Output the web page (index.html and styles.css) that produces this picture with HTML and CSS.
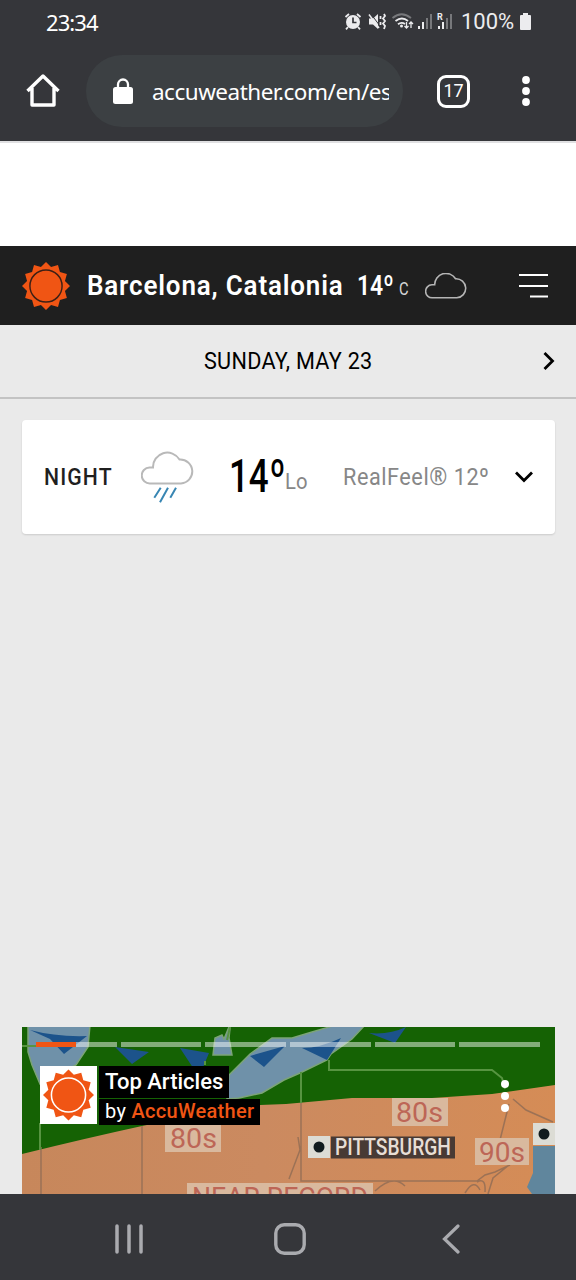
FILE: index.html
```html
<!DOCTYPE html>
<html lang="en">
<head>
<meta charset="utf-8">
<title>Barcelona, Catalonia Weather</title>
<link rel="stylesheet" href="styles.css">
</head>
<body>
<svg class="symbols" aria-hidden="true">
  <symbol id="sun" viewBox="-100 -100 200 200">
    <path fill="#f05514" d="M0-100 21-79 50-87 58-58 87-50 79-21 100 0 79 21 87 50 58 58 50 87 21 79 0 100-21 79-50 87-58 58-87 50-79 21-100 0-79-21-87-50-58-58-50-87-21-79Z"/>
    <circle r="67" fill="none" stroke="currentColor" stroke-width="6"/>
  </symbol>
</svg>
<div class="screen">
  <header class="chrome">
    <div class="status">
      <span class="clock">23:34</span>
      <svg class="status-icons" viewBox="0 0 116 22" width="116" height="22">
        <g fill="none" stroke="#ececee">
          <circle cx="9" cy="11" r="7" fill="#ececee" stroke="none"/>
          <path stroke="#35363a" stroke-width="1.7" d="M9 6.500V11.500H12.500"/>
          <path stroke-width="1.800" d="M1.500 6 5 3M13 3l3.500 3M4 16l-2 2.300M14 16l2 2.300"/>
          <path fill="#ececee" stroke="none" d="M25 7.500h4l5-4.500v15l-5-4.500h-4Z"/>
          <path stroke="#35363a" stroke-width="1" d="M27 3 36 15"/>
          <path stroke-width="1.500" d="M25 3.500 35 17"/>
          <path stroke-width="1.800" d="M40 3l1 2-2 2.500 2 2.500-2 2.500 2 2.500-1 3M36.500 5v3M36.500 11v3"/>
          <path stroke="#77787b" stroke-width="1.800" d="M48.500 7Q57.500-.5 67 7"/>
          <path stroke-width="1.800" d="M51.500 10Q58 5 64 10M54 13.200Q57.500 10.500 61 13"/>
          <circle cx="57.500" cy="15" r="1.500" fill="#ececee" stroke="none"/>
          <path stroke-width="1.300" d="M62.500 11v6M60.500 15l2 2 2-2M67 17v-6M65 13l2-2 2 2"/>
        </g>
        <g fill="#ececee">
          <path d="M74 15h2v3h-2zM78 11h2v7h-2zM94 15h2v3h-2zM98 11h2v7h-2z"/>
          <path fill="#77787b" d="M82 7h2v11h-2zM86 3h2v15h-2zM102 7h2v11h-2zM106 3h2v15h-2z"/>
          <text x="93" y="9" class="roaming">R</text>
        </g>
      </svg>
      <span class="percent">100%</span>
      <svg class="battery" viewBox="0 0 11 17" width="11" height="17"><path fill="#ececee" d="M3 0h5v2h2q1 0 1 1v13q0 1-1 1H1q-1 0-1-1V3q0-1 1-1h2Z"/></svg>
    </div>
    <div class="toolbar">
      <svg class="home" viewBox="0 0 34 34" width="34" height="34"><path fill="none" stroke="#fff" stroke-width="3.400" stroke-linejoin="round" d="M1.500 17 17 2 32.500 17M6 14v17h22V14"/></svg>
      <div class="address">
        <svg viewBox="0 0 20 26" width="20" height="26"><rect y="9" width="20" height="17" rx="2.500" fill="#fff"/><path d="M5 10V6.500a5 5 0 0 1 10 0V10" fill="none" stroke="#fff" stroke-width="2.300"/></svg>
        <span class="url">accuweather.com/en/es</span>
      </div>
      <span class="tabs">17</span>
      <svg class="more" viewBox="0 0 8 30" width="8" height="30" fill="#fff"><circle cx="4" cy="4" r="3.900"/><circle cx="4" cy="15" r="3.900"/><circle cx="4" cy="26" r="3.900"/></svg>
    </div>
  </header>
  <main>
    <div class="ad-space"></div>
    <div class="location">
      <svg class="brand"><use href="#sun"/></svg>
      <span class="city">Barcelona, Catalonia</span>
      <span class="now">14º</span>
      <span class="unit">C</span>
      <svg class="now-cloud" viewBox="0 1.500 54 33" width="43" height="26"><path class="cloud" d="M9 33a8 8 0 0 1-.5-16.500H12A14.300 14.300 0 0 1 38.500 8.800 A12.100 12.100 0 1 1 40 33Z"/></svg>
      <svg class="menu" viewBox="0 0 30 25" width="30" height="25"><path stroke="#fff" stroke-width="2" d="M0 2h29M0 13h29M11 23.500h18"/></svg>
    </div>
    <div class="day">
      <span class="date">SUNDAY, MAY 23</span>
      <svg class="next" viewBox="0 0 12 20" width="12" height="20"><path fill="none" stroke="#000" stroke-width="2.800" d="m1.500 2 8 8-8 8"/></svg>
    </div>
    <section class="night">
      <span class="period">NIGHT</span>
      <svg class="rain" viewBox="0 0 54 52" width="54" height="52"><path class="cloud rain-cloud" d="M9 32.500a8 8 0 0 1-.5-16H12A14.300 14.300 0 0 1 38.500 8.500 A12 12 0 1 1 40 32.500Z"/><path stroke="#3886b3" stroke-width="2" d="M19.700 36.700 13.300 46.700M27 36.700 19 51.300M35 36.700 29.300 46.700"/></svg>
      <span class="low">14<span class="degree">º</span></span>
      <span class="lo">Lo</span>
      <span class="feel">RealFeel<span class="mark">®</span> 12º</span>
      <svg class="expand" viewBox="0 0 20 12" width="20" height="12"><path fill="none" stroke="#000" stroke-width="2.800" d="m2 1.500 8 8 8-8"/></svg>
    </section>
    <section class="story">
      <svg class="map" viewBox="0 0 533 167" width="533" height="167">
        <defs>
          <linearGradient id="land"><stop stop-color="#c7875b"/><stop offset=".45" stop-color="#cb8a60"/><stop offset="1" stop-color="#d58c56"/></linearGradient>
        </defs>
        <path fill="#156204" d="M0 0h533v167H0z"/>
        <g fill="#6f91a9" stroke="#7ca477" stroke-width="1.500">
          <path d="M6-2H68L66 20 54 38 18 57 10 38 6 25Z"/>
          <path d="M205 72 207 48 228 27 250 11 270 11 290 5 314-2H343L330 12 309 27 305 33 278 46 262 53 240 66 217 71Z"/>
          <path d="M191 28l2-17 7-3 2 4 5-12 1 1-1 10 3 17Z"/>
        </g>
        <g fill="#1c538b">
          <path d="M8 3Q34 10 65 9L42 27 28 12ZM93 20l34 5-17 12ZM158 21l29 5-10 24ZM228 29l35-10-21 21ZM280 21q18 0 39-10l-14 22ZM347 6q20 2 37-6L373 16Z"/>
        </g>
        <path fill="url(#land)" d="M0 127Q65 111 120 99 178 87 238 78L264 77 330 71H410L470 67 533 58V167H0Z"/>
        <g fill="none" stroke="#966f55" stroke-width="1.500" opacity=".9">
          <path d="M19 120V167M120 99V167M279 76V154H455L463 148 473 145 488 138M276 110 278 123 267 152M487 77 480 105 478 113M491 72 504 83 531 95M455 155q9-5 8 10M487 138l-16 13-5 16M353 164q18-17 30-5M443 166q9-15 15-3"/>
        </g>
        <path fill="none" stroke="#579441" stroke-width="2" d="M0 19H14M18 96V123M279 45V76M307 33V43H470L480 51 483 62M205 13 208 0M183 38V34"/>
        <path fill="#60869d" d="M511 119H533V167H510L505 160 511 146Z"/>
        <g fill="#d9b99e">
          <path d="M143 98h56v27h-56zM370 71h56v28h-56zM453 111h54v27h-54zM165 156h186v11H165z"/>
          <path fill="#dcdcd5" d="M286 109h22v22h-22zM511 96h22v22h-22z"/>
        </g>
        <path fill="#483a34" d="M309 109.500h124v22H309z"/>
        <circle cx="297" cy="120" r="5.500" fill="#111b1e"/><circle cx="522" cy="107" r="5.500" fill="#111b1e"/>
        <g class="map-label">
          <text x="148" y="121" textLength="47" lengthAdjust="spacingAndGlyphs">80s</text>
          <text x="374" y="94.500" textLength="47" lengthAdjust="spacingAndGlyphs">80s</text>
          <text x="457" y="134.500" textLength="46" lengthAdjust="spacingAndGlyphs">90s</text>
          <text x="170" y="180" textLength="176" lengthAdjust="spacingAndGlyphs">NEAR RECORD</text>
          <text class="map-city" x="313" y="128" textLength="116" lengthAdjust="spacingAndGlyphs">PITTSBURGH</text>
        </g>
      </svg>
      <div class="story-overlay">
        <div class="progress"><i class="current"></i><i></i><i></i><i></i><i></i><i></i></div>
        <div class="story-head">
          <div class="story-logo"><svg><use href="#sun"/></svg></div>
          <div class="story-copy">
            <div class="story-title">Top Articles</div>
            <div class="story-by">by <b>AccuWeather</b></div>
          </div>
          <svg class="story-more" viewBox="0 0 8 32" width="8" height="32" fill="#fff"><circle cx="4" cy="4" r="4"/><circle cx="4" cy="16" r="4"/><circle cx="4" cy="28" r="4"/></svg>
        </div>
      </div>
    </section>
  </main>
  <footer class="navigation">
    <svg viewBox="0 0 30 32" width="30" height="32"><path stroke="#aaabaf" stroke-width="3.500" stroke-linecap="round" d="M3 3v26M15 3v26M27 3v26"/></svg>
    <svg viewBox="0 0 32 32" width="32" height="32"><rect x="1.800" y="1.800" width="28.400" height="28.400" rx="8.500" fill="none" stroke="#aaabaf" stroke-width="3.400"/></svg>
    <svg viewBox="0 0 18 32" width="18" height="32"><path fill="none" stroke="#aaabaf" stroke-width="3.200" stroke-linecap="round" d="M16 3 2.500 16 16 29"/></svg>
  </footer>
</div>
</body>
</html>
```

FILE: styles.css
```css
* { box-sizing: border-box; }
body { margin: 0; font-family: Roboto, "Liberation Sans", sans-serif; }
svg { display: block; flex: none; }
span { white-space: nowrap; flex: none; }
.symbols { width: 0; height: 0; position: absolute; }
.screen { width: 576px; height: 1280px; display: flex; flex-direction: column; overflow: hidden; background: #eaeaea; }

.chrome { height: 141px; background: #35363a; color: #fff; flex: none; }
.status { height: 43px; display: flex; align-items: center; padding-left: 46px; }
.clock { width: 298px; font: 22px "Noto Sans", sans-serif; letter-spacing: -.9px; }
.status-icons { width: 116px; }
.roaming { font: bold 9px Roboto, sans-serif; }
.percent { width: 60px; margin-left: 1px; font-size: 22px; color: #ececee; }
.battery { margin-left: -1px; }
.toolbar { height: 96px; display: flex; align-items: center; padding-left: 26px; }
.address { width: 317px; height: 72px; margin-left: 26px; padding-left: 27px; display: flex; align-items: center; border-radius: 36px; background: #3c4043; }
.address svg { margin-right: 19px; }
.url { width: 237px; overflow: hidden; font: 22.500px "Noto Sans", sans-serif; letter-spacing: -.5px; }
.tabs { width: 33px; height: 33px; margin-left: 34px; border: 3.500px solid #fff; border-radius: 9px; font-size: 18px; line-height: 26px; text-align: center; }
.more { margin-left: 51.500px; }

main { height: 1053px; flex: none; display: flex; flex-direction: column; }
.ad-space { height: 105px; background: #fff; border-top: 2px solid #e0e0e2; flex: none; }
.location { height: 79px; flex: none; display: flex; align-items: center; padding-left: 22px; background: #1f1f1f; color: #fff; }
.brand { width: 48px; height: 48px; color: #3c2016; }
/* Condensed faces: glyphs are narrowed from their left edge */
.city, .now, .unit, .date, .period, .low, .lo, .feel { transform-origin: left center; }
.city { width: 256px; margin-left: 17px; font-size: 28px; font-weight: 600; letter-spacing: .9px; transform: scaleX(.928); }
.now { width: 36px; margin-left: 14px; font-size: 28px; font-weight: 600; transform: scaleX(.82); }
.unit { width: 11px; margin: 5px 0 0 6px; font-size: 18px; color: #d5d5d5; transform: scaleX(.82); }
.cloud { fill: none; stroke: #b5b5b5; stroke-width: 2; }
.now-cloud { margin-left: 14.500px; }
.menu { margin-left: 51.500px; }
.day { height: 74px; flex: none; display: flex; align-items: center; padding-left: 204px; border-bottom: 2px solid #c3c3c3; color: #000; }
.date { width: 168px; margin-top: -2px; font-size: 24.500px; letter-spacing: .3px; transform: scaleX(.884); }
.next { margin-left: 171px; }
.night { width: 533px; height: 114px; margin: 21px 0 0 22px; padding-left: 21.500px; flex: none; display: flex; align-items: center; border-radius: 4px; background: #fff; box-shadow: 0 1px 2px #0002; }
.period { width: 70px; margin-top: -1px; font-size: 24.500px; font-weight: 500; letter-spacing: 1.300px; color: #1f1f1f; transform: scaleX(.865); }
.rain { margin-left: 27.500px; }
.rain-cloud { stroke: #b9b9b9; }
.low { width: 56px; margin: -3px 0 0 34px; font-size: 46px; font-weight: 500; color: #000; transform: scaleX(.76); }
.degree { margin-left: 1px; }
.lo { width: 25px; margin: 9px 0 0; font-size: 22px; color: #878787; transform: scaleX(.92); }
.feel { width: 149px; margin: -2px 0 0 33px; font-size: 24.500px; letter-spacing: .6px; color: #878787; transform: scaleX(.885); }
.mark { font-family: "Noto Sans", sans-serif; line-height: 1; }
.expand { margin-left: 22px; }

.story { width: 533px; height: 167px; margin: auto 0 0 22px; display: grid; flex: none; overflow: hidden; }
.map, .story-overlay { grid-area: 1 / 1; }
.map-label { fill: #bd6656; font: 28px Roboto, sans-serif; }
.map-city { fill: #e7ded5; font-size: 23px; font-weight: 500; }
.story-overlay { padding: 15px 15px 0 14px; }
.progress { height: 5px; display: grid; grid-template-columns: repeat(6, 1fr); gap: 4px; }
.progress i { background: #ffffff78; }
.progress .current { background: linear-gradient(90deg, #f05514 50%, #ffffff78 50%); }
.story-head { display: flex; margin: 19px 0 0 4px; }
.story-logo { width: 57px; height: 58px; padding: 3px; background: #fff; color: #fff; }
.story-logo svg { width: 51px; height: 52px; }
.story-copy { width: 161px; margin-left: 2px; color: #fff; white-space: nowrap; }
.story-title { width: 130px; height: 32px; padding-left: 6px; background: #000; font-size: 22px; font-weight: 500; line-height: 31px; }
.story-by { width: 161px; height: 26px; margin-top: 1px; padding-left: 6px; background: #000; font-size: 20px; line-height: 25px; letter-spacing: .3px; }
.story-by b { font-weight: 500; color: #f05514; }
.story-more { margin: 14px 0 0 241px; }
.navigation { height: 86px; flex: none; display: flex; align-items: center; padding: 4px 0 0 114px; background: #35363a; }
.navigation svg + svg { margin-left: 130px; }
.navigation svg:last-child { margin-left: 136px; }
```
